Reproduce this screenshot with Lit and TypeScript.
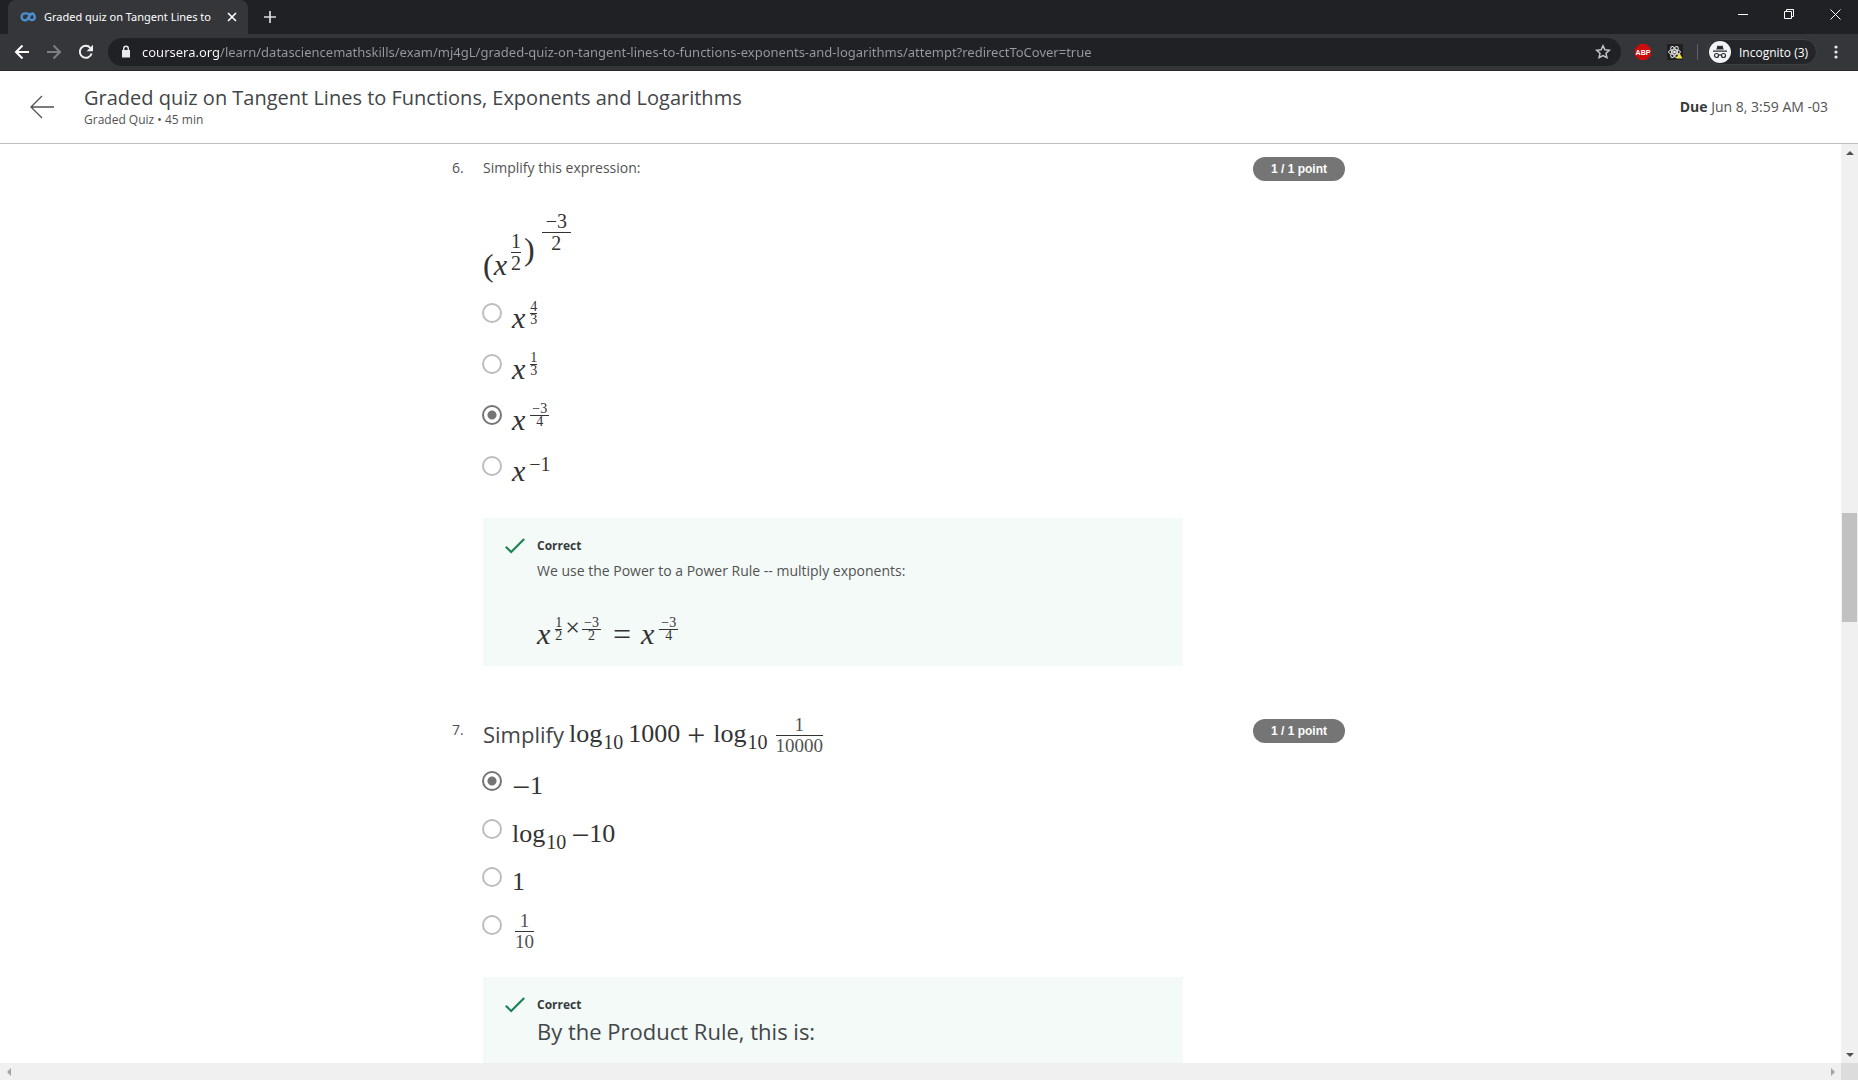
import { LitElement, html, svg, css, nothing, type TemplateResult } from "lit";
import { customElement, property } from "lit/decorators.js";

/* ---------- math helpers ---------- */

const x = html`<i class="var">x</i>`;
const minus = html`<span class="minus">−</span>`;
const num = (t: string) => html`<span class="num">${t}</span>`;
const sub = (t: string) => html`<span class="sub">${t}</span>`;
const frac = (a: string, b: string, size = "text") => html`
  <span class="frac ${size}"><span class="top">${a}</span><span class="bottom">${b}</span></span>`;

interface Choice {
  body: TemplateResult;
  checked?: boolean;
}

interface Question {
  id: number;
  prompt: TemplateResult;
  choices: Choice[];
  feedback: TemplateResult;
  tight?: boolean;
}

const QUESTIONS: Question[] = [
  {
    id: 6,
    prompt: html`
      <p class="text lead">Simplify this expression:</p>
      <div class="math expression">
        <span class="paren">(</span>${x}${frac("1", "2", "inner")}<span class="paren raised">)</span>${frac("−3", "2", "outer")}
      </div>`,
    choices: [
      { body: html`${x}${frac("4", "3", "script")}` },
      { body: html`${x}${frac("1", "3", "script")}` },
      { body: html`${x}${frac("−3", "4", "script wide")}`, checked: true },
      { body: html`${x}<span class="sup">−1</span>` },
    ],
    feedback: html`
      <p class="text">We use the Power to a Power Rule -- multiply exponents:</p>
      <div class="math derivation">
        ${x}${frac("1", "2", "script")}<span class="times">×</span>${frac("−3", "2", "script wide flush")}<span class="equals">=</span>${x}${frac("−3", "4", "script wide")}
      </div>`,
  },
  {
    id: 7,
    tight: true,
    prompt: html`
      <div class="math prompt">
        <span class="large word">Simplify</span>${num("log")}${sub("10")}<span class="num gap">1000</span><span class="plus">+</span>${num("log")}${sub("10")}${frac("1", "10000", "text gap")}
      </div>`,
    choices: [
      { body: html`${minus}${num("1")}`, checked: true },
      { body: html`${num("log")}${sub("10")}<span class="gap">${minus}</span>${num("10")}` },
      { body: num("1") },
      { body: frac("1", "10", "text lone") },
    ],
    feedback: html`<p class="large">By the Product Rule, this is:</p>`,
  },
];

/* ---------- browser frame ---------- */

@customElement("browser-bar")
export class BrowserBar extends LitElement {
  static styles = css`
    :host { display: block; flex: none; font-family: "Open Sans", "Noto Sans", sans-serif; color: #fff; }
    button { border: 0; padding: 0; margin: 0; background: none; color: inherit; font: inherit; display: grid; place-items: center; }
    svg { display: block; }
    .strip { display: flex; height: 34px; background: #202124; padding-left: 8px; }
    .tab { display: flex; align-items: center; width: 240px; box-sizing: border-box; padding: 0 8px 0 12px; background: #35363a; border-radius: 8px 8px 0 0; }
    .title { flex: 1; margin: 0 4px 0 8px; white-space: nowrap; font-family: "Noto Sans", sans-serif; font-size: 11px; line-height: 18px; }
    .small { width: 16px; height: 16px; }
    .new { width: 28px; height: 34px; margin-left: 8px; }
    .window { margin-left: auto; display: flex; height: 28px; }
    .window button { width: 46px; }
    .tools { display: flex; align-items: center; height: 36px; background: #35363a; border-bottom: 1px solid #29292c; }
    .nav { display: flex; gap: 8px; padding: 0 10px; }
    .nav button { width: 24px; height: 28px; }
    .address { flex: 1; display: flex; align-items: center; height: 28px; border-radius: 14px; background: #202124; padding: 0 8px 0 12px; }
    .url {
      flex: 1; min-width: 0; margin-left: 10px; border: 0; outline: 0; padding: 0; height: 28px;
      font-family: "Noto Sans", sans-serif; font-size: 13px; color: transparent;
      background: linear-gradient(to right, #fff 78px, #969ba1 78px); background-clip: text; -webkit-background-clip: text;
    }
    .ext { display: flex; align-items: center; gap: 16px; padding-left: 14px; }
    .rule { width: 1px; height: 16px; background: #5f6368; margin: 0 -7px 0 -2px; }
    .pill { display: flex; align-items: center; gap: 8px; width: 110px; height: 26px; box-sizing: border-box; border-radius: 13px; background: #242529; border: 1px solid #3f4044; padding-left: 1px; font-size: 12px; }
    .menu { width: 38px; height: 28px; margin-right: 3px; }
  `;

  render() {
    return html`
      <div class="strip">
        <div class="tab">
          <svg width="16" height="16" viewBox="0 0 16 16" fill="none" stroke="#4b8fd0" stroke-width="2.4">
            <path d="M9.8 6.1C8.4 4.2 6.600 4.400 5.100 4.400a3.400 3.400 0 0 0 0 7c3.300 0 3.800-3.600 5.200-5.500 1-1.400 2.200-1.600 3.300-1M9.400 9.600c1.200 2.200 5.400 2.200 5.400-1.500 0-2-1.200-3.400-2.800-3.400-2.600 0-3 3.600-4.300 5.400"/>
          </svg>
          <span class="title">Graded quiz on Tangent Lines to</span>
          <button class="small" aria-label="Close tab">
            <svg width="10" height="10" viewBox="0 0 10 10" stroke="#fff" stroke-width="1.6"><path d="M1 1l8 8M9 1l-8 8"/></svg>
          </button>
        </div>
        <button class="new" aria-label="New tab">
          <svg width="12" height="12" viewBox="0 0 12 12" stroke="#dadce0" stroke-width="1.7"><path d="M6 0v12M0 6h12"/></svg>
        </button>
        <div class="window">
          <button aria-label="Minimise"><svg width="10" height="10" viewBox="0 0 10 10" stroke="#fff"><path d="M0 5.500h10"/></svg></button>
          <button aria-label="Restore"><svg width="10" height="10" viewBox="0 0 10 10" fill="none" stroke="#fff"><path d="M.5 2.500h7v7h-7zM2.500 2.500v-2h7v7h-2"/></svg></button>
          <button aria-label="Close"><svg width="11" height="11" viewBox="0 0 11 11" stroke="#fff"><path d="M.5 .5l10 10M10.500 .5l-10 10"/></svg></button>
        </div>
      </div>
      <div class="tools">
        <div class="nav">
          <button aria-label="Back"><svg width="16" height="16" viewBox="0 0 16 16" fill="none" stroke="#fff" stroke-width="2"><path d="M15 8H2.500M8.500 1.500L2 8l6.500 6.500"/></svg></button>
          <button aria-label="Forward"><svg width="16" height="16" viewBox="0 0 16 16" fill="none" stroke="#7d7f83" stroke-width="2"><path d="M1 8h12.500M7.500 1.500L14 8l-6.500 6.500"/></svg></button>
          <button aria-label="Reload"><svg width="16" height="16" viewBox="0 0 16 16" fill="none" stroke="#f1f1f1" stroke-width="2"><path d="M13.600 9.500A6 6 0 1 1 12.300 3.800"/><path d="M15 .8v6.400H8.600z" fill="#f1f1f1" stroke="none"/></svg></button>
        </div>
        <div class="address">
          <svg width="12" height="14" viewBox="0 0 12 14"><path d="M2 5h8v7.500H2z" fill="#e8eaed"/><path d="M3.700 5V3.500a2.300 2.300 0 0 1 4.600 0V5" fill="none" stroke="#e8eaed" stroke-width="1.400"/></svg>
          <input class="url" aria-label="Address" value="coursera.org/learn/datasciencemathskills/exam/mj4gL/graded-quiz-on-tangent-lines-to-functions-exponents-and-logarithms/attempt?redirectToCover=true">
          <button aria-label="Bookmark this page">
            <svg width="20" height="20" viewBox="0 0 20 20" fill="none" stroke="#c4c7cb" stroke-width="1.500"><path d="M10 3.800l1.900 4 4.400.5-3.300 3 .9 4.300L10 13.500l-3.900 2.100.9-4.300-3.300-3 4.400-.5z"/></svg>
          </button>
        </div>
        <div class="ext">
          <button aria-label="ABP">
            <svg width="16" height="16" viewBox="0 0 16 16"><path d="M4.700 0h6.600L16 4.700v6.600L11.300 16H4.700L0 11.300V4.700z" fill="#cc0d0d"/><text x="8" y="10.500" text-anchor="middle" font-family="Liberation Sans" font-weight="700" font-size="7" fill="#fff">ABP</text></svg>
          </button>
          <button aria-label="Developer tools">
            <svg width="16" height="16" viewBox="0 0 16 16"><path d="M0 0h16v16H0z" fill="#202020"/><g fill="none" stroke="#e6e6e6"><ellipse cx="7.500" cy="8" rx="6" ry="2.300"/><ellipse cx="7.500" cy="8" rx="6" ry="2.300" transform="rotate(60 7.500 8)"/><ellipse cx="7.500" cy="8" rx="6" ry="2.300" transform="rotate(120 7.500 8)"/></g><circle cx="7.500" cy="8" r="1.300" fill="#fff"/><path d="M12.500 9l3 5.500h-6z" fill="#f7e733"/></svg>
          </button>
          <span class="rule"></span>
          <button class="pill">
            <svg width="22" height="22" viewBox="0 0 22 22"><circle cx="11" cy="11" r="11" fill="#f1f3f4"/><g fill="#2b2c30"><path d="M7.300 8.600l1.200-4.100c1.700.5 3.300.5 5 0l1.200 4.100zM4 9.500h14v1.200H4z"/></g><g fill="none" stroke="#2b2c30" stroke-width="1.200"><circle cx="7.500" cy="14.500" r="2"/><circle cx="14.500" cy="14.500" r="2"/><path d="M9.500 14.200c1-.5 2-.5 3 0"/></g></svg>
            <span>Incognito (3)</span>
          </button>
        </div>
        <button class="menu" aria-label="Menu"><svg width="4" height="14" viewBox="0 0 4 14" fill="#e8eaed"><circle cx="2" cy="2" r="1.600"/><circle cx="2" cy="7" r="1.600"/><circle cx="2" cy="12" r="1.600"/></svg></button>
      </div>`;
  }
}

/* ---------- one quiz question ---------- */

@customElement("quiz-question")
export class QuizQuestion extends LitElement {
  @property({ attribute: false }) question!: Question;

  static styles = css`
    :host { display: grid; grid-template-columns: 31px minmax(0, 700px) 1fr; color: #373a3c; }
    p { margin: 0; }
    .id { padding-top: 4px; font-size: 14px; line-height: 20px; color: #525252; }
    .text { font-size: 14px; line-height: 20px; color: #525252; }
    .lead { padding-top: 4px; }
    .large { font-family: "Open Sans", sans-serif; font-size: 22px; line-height: 26px; color: #434648; }
    .badge { justify-self: end; align-self: start; margin-top: 3px; width: 92px; height: 24px; border-radius: 12px; background: #757575; color: #fff; font: bold 12px/24px "Liberation Sans", Arial, sans-serif; text-align: center; }

    .math { display: flex; align-items: flex-end; font-family: "Liberation Serif", serif; color: #333; white-space: nowrap; min-height: 34px; }
    .num { font-size: 26px; line-height: 26px; }
    .var { font-size: 30px; line-height: 26px; font-style: italic; }
    .minus { display: block; font-size: 32px; line-height: 24px; }
    .sub, .sup { font-size: 20px; line-height: 18px; }
    .sub { margin: 0 0 -4px 1px; }
    .sup { margin: 0 0 11px 4px; }
    .gap { margin-left: 5px; }
    .plus { font-size: 32px; line-height: 24px; margin: 0 8px 0 7px; }
    .paren { font-size: 32px; line-height: 26px; }
    .raised { margin: 0 0 16px 3px; }
    .times { font-size: 26px; line-height: 26px; margin: 0 2px 6px 3px; }
    .equals { font-size: 32px; line-height: 26px; margin: 0 10px 0 12px; }
    .word { margin-right: 5px; }

    .frac { display: flex; flex-direction: column; text-align: center; font-size: 20px; line-height: 18px; margin-bottom: -8px; }
    .top { padding-bottom: 1px; border-bottom: 1px solid #333; }
    .bottom { padding-top: 1px; }
    .frac.gap { margin-left: 8px; }
    .frac.text { font-size: 19px; }
    .frac.lone { margin-left: 3px; }
    .frac.inner { margin: 0 0 6px 4px; }
    .frac.outer { margin: 0 0 26px 7px; }
    .outer .top, .inner .top { padding-bottom: 2px; }
    .outer .top { padding-left: 4px; padding-right: 4px; }
    .frac.script { font-size: 14px; line-height: 10px; margin: 0 0 6px 5px; }
    .wide .top { padding-left: 2px; padding-right: 2px; }
    .frac.flush { margin-left: 0; }

    .expression { margin-top: 34px; margin-bottom: 18px; }
    .prompt { min-height: 31px; margin-bottom: 18px; }
    .derivation { margin-top: 32px; }

    .choices { border: 0; margin: 0; padding: 1px 0 0; }
    .tight .choices { padding-top: 0; }
    .choice { display: flex; align-items: flex-start; min-height: 51px; }
    .tight .choice { min-height: 48px; }
    .radio { appearance: none; flex: none; box-sizing: border-box; width: 20px; height: 20px; margin: 6px 10px 0 -1px; border: 2px solid #bdbdbd; border-radius: 50%; background: #fff; }
    .radio:checked { border-color: #757575; background: radial-gradient(circle, #757575 0 4px, #fff 5px); }

    .feedback { display: flex; gap: 12px; box-sizing: border-box; min-height: 148px; margin-top: 17px; padding: 19px 22px; background: #f4faf8; }
    .tight .feedback { margin-top: 20px; }
    .tick { flex: none; margin-top: 1px; }
    .verdict { font-size: 12px; line-height: 18px; font-weight: 700; margin-bottom: 6px; color: #373a3c; }
    .tight .verdict { margin-bottom: 4px; }
  `;

  render() {
    const q = this.question;
    return html`
      <span class="id">${q.id}.</span>
      <div class="${q.tight ? "tight" : nothing}">
        ${q.prompt}
        <fieldset class="choices" aria-label="Question ${q.id}">
          ${q.choices.map(
            (c) => html`
              <label class="choice">
                <input class="radio" type="radio" name="answer" .checked=${!!c.checked}>
                <span class="math">${c.body}</span>
              </label>`,
          )}
        </fieldset>
        <div class="feedback">
          <svg class="tick" width="20" height="16" viewBox="0 0 20 16" fill="none" stroke="#1f8354" stroke-width="2.200"><path d="M.8 8.800l5.400 5.200L19.200 1"/></svg>
          <div>
            <p class="verdict">Correct</p>
            ${q.feedback}
          </div>
        </div>
      </div>
      <span class="badge">1 / 1 point</span>`;
  }
}

/* ---------- page ---------- */

const arrow = (d: string, fill: string) =>
  svg`<svg width="8" height="8" viewBox="0 0 8 8"><path d=${d} fill=${fill}/></svg>`;

@customElement("app-root")
export class AppRoot extends LitElement {
  static styles = css`
    :host { display: flex; flex-direction: column; height: 100vh; overflow: hidden; background: #fff; font-family: "Open Sans", sans-serif; color: #373a3c; }
    .header { flex: none; display: flex; align-items: center; height: 72px; border-bottom: 1px solid #bdbdbd; padding: 0 30px; }
    .back { display: block; width: 24px; height: 24px; margin-right: 30px; }
    .heading { flex: 1; }
    .heading h1 { margin: 0; font-weight: 400; font-size: 20px; line-height: 26px; color: #434648; }
    .heading p { margin: 0; font-size: 12px; line-height: 18px; color: #525252; }
    .due { font-size: 14px; line-height: 20px; color: #525252; }
    .due b { color: #373a3c; }
    .view { flex: 1; min-height: 0; display: flex; }
    .page { flex: 1; min-width: 0; overflow: hidden; padding-top: 10px; }
    .column { max-width: 893px; margin: 0 auto; padding-right: 44px; display: flex; flex-direction: column; gap: 50px; }
    .vbar { flex: none; width: 17px; background: #f0f0f0; display: flex; flex-direction: column; align-items: center; }
    .track { flex: 1; display: grid; grid-template-rows: 352fr 109fr 424fr; }
    .thumb { grid-row: 2; width: 15px; background: #c1c1c1; }
    .cap { width: 17px; height: 17px; display: grid; place-items: center; }
    .hbar { flex: none; height: 17px; background: #f0f0f0; display: flex; justify-content: space-between; }
    .end { display: flex; }
    .corner { width: 17px; background: #dcdcdc; }
  `;

  render() {
    return html`
      <browser-bar></browser-bar>
      <header class="header">
        <a class="back" href="#" aria-label="Back">
          <svg width="24" height="24" viewBox="0 0 24 24" fill="none" stroke="#525252" stroke-width="1.300"><path d="M24 12H1M12 1L1 12l11 11"/></svg>
        </a>
        <div class="heading">
          <h1>Graded quiz on Tangent Lines to Functions, Exponents and Logarithms</h1>
          <p>Graded Quiz • 45 min</p>
        </div>
        <div class="due"><b>Due</b> Jun 8, 3:59 AM -03</div>
      </header>
      <div class="view">
        <main class="page">
          <div class="column">
            ${QUESTIONS.map((q) => html`<quiz-question .question=${q}></quiz-question>`)}
          </div>
        </main>
        <div class="vbar">
          <span class="cap">${arrow("M0 6L4 2l4 4z", "#505050")}</span>
          <div class="track"><span class="thumb"></span></div>
          <span class="cap">${arrow("M0 2l4 4 4-4z", "#505050")}</span>
        </div>
      </div>
      <div class="hbar">
        <span class="cap">${arrow("M6 0L2 4l4 4z", "#a3a3a3")}</span>
        <div class="end"><span class="cap">${arrow("M2 0l4 4-4 4z", "#a3a3a3")}</span><span class="corner"></span></div>
      </div>`;
  }
}
